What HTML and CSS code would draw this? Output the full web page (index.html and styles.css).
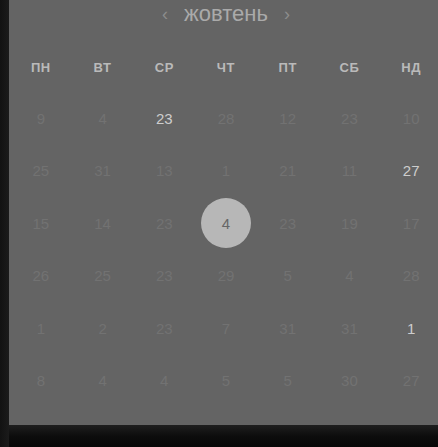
FILE: index.html
```html
<!DOCTYPE html>
<html lang="uk">
<head>
<meta charset="utf-8">
<link rel="stylesheet" href="styles.css">
</head>
<body>
<div class="app">
  <div class="side"></div>
  <div class="main">
    <div class="panel">
      <div class="header">
        <span class="chev">‹</span>
        <span class="month">жовтень</span>
        <span class="chev">›</span>
      </div>
      <div class="weekdays">
        <span>ПН</span><span>ВТ</span><span>СР</span><span>ЧТ</span><span>ПТ</span><span>СБ</span><span>НД</span>
      </div>
      <div class="days">
        <span>9</span><span>4</span><span class="hi">23</span><span>28</span><span>12</span><span>23</span><span>10</span>
        <span>25</span><span>31</span><span>13</span><span>1</span><span>21</span><span>11</span><span class="hi">27</span>
        <span>15</span><span>14</span><span>23</span><span class="sel"><b>4</b></span><span>23</span><span>19</span><span>17</span>
        <span>26</span><span>25</span><span>23</span><span>29</span><span>5</span><span>4</span><span>28</span>
        <span>1</span><span>2</span><span>23</span><span>7</span><span>31</span><span>31</span><span class="hi">1</span>
        <span>8</span><span>4</span><span>4</span><span>5</span><span>5</span><span>30</span><span>27</span>
      </div>
    </div>
    <div class="footer"></div>
  </div>
</div>
</body>
</html>
```
FILE: styles.css
```css
html, body {
  margin: 0;
  padding: 0;
  width: 438px;
  height: 447px;
  overflow: hidden;
  background: #0a0a0a;
}
.app {
  display: flex;
  height: 447px;
  font-family: "Liberation Sans", Arial, sans-serif;
}
.side {
  flex: none;
  width: 9px;
  background: linear-gradient(to right, #121212, #1b1b1b);
}
.main {
  flex: none;
  width: 434px;
  display: flex;
  flex-direction: column;
}
.panel {
  height: 425px;
  background: #646464;
  padding-left: 1px;
  box-sizing: border-box;
  width: 433px;
}
.header {
  height: 28px;
  display: flex;
  align-items: center;
  justify-content: center;
  gap: 16px;
  width: 432px;
}
.month {
  font-size: 22px;
  color: #aaaaaa;
  line-height: 28px;
}
.chev {
  font-size: 18px;
  color: #8c8c8c;
  line-height: 28px;
}
.weekdays {
  margin-top: 14px;
  height: 50px;
  display: grid;
  grid-template-columns: repeat(7, 1fr);
  width: 432px;
  align-items: center;
  justify-items: center;
  font-size: 13px;
  font-weight: bold;
  letter-spacing: 0.6px;
  color: #bababa;
}
.days {
  display: grid;
  grid-template-columns: repeat(7, 1fr);
  grid-auto-rows: 52.5px;
  width: 432px;
  align-items: center;
  justify-items: center;
  font-size: 15px;
  color: #727272;
}
.days .hi {
  color: #cdcdcd;
}
.days .sel {
  width: 50px;
  height: 50px;
  border-radius: 50%;
  background: #b7b7b7;
  color: #666;
  display: flex;
  align-items: center;
  justify-content: center;
}
.days .sel b {
  font-weight: normal;
}
.footer {
  height: 22px;
  background: linear-gradient(to bottom, #1f1f1f, #0d0d0d 50%, #070707);
}
```
